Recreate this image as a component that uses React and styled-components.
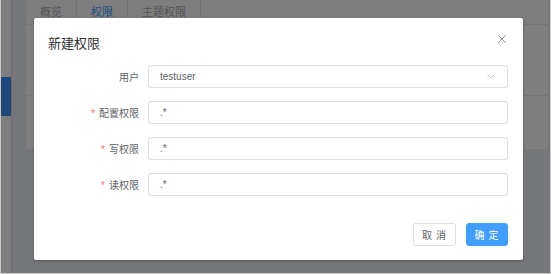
import React from "react";
import styled, { createGlobalStyle } from "styled-components";

const GlobalStyle = createGlobalStyle`
  html, body {
    margin: 0;
    padding: 0;
    background: #ffffff;
  }
  body {
    font-family: "Liberation Sans", "Noto Sans CJK SC", sans-serif;
  }
  * {
    box-sizing: border-box;
  }
`;

const Frame = styled.div`
  position: relative;
  width: 551px;
  height: 274px;
  display: flex;
  overflow: hidden;
  border-left: 1px solid #c9c9c9;
  border-right: 1px solid #c9c9c9;
  border-bottom: 1px solid #c9c9c9;
`;

const Sidebar = styled.div`
  width: 11px;
  background: #fcfcfc;
  border-right: 1px solid #d6d7dc;
  padding-top: 77px;
`;

const NavActive = styled.div`
  height: 39px;
  background: #3d8ef5;
`;

const Main = styled.div`
  flex: 1;
  background: #eceef4;
  padding: 0 2px 0 14px;
`;

const Card = styled.div`
  height: 149px;
  background: #ffffff;
`;

const TabBar = styled.div`
  display: flex;
  height: 25px;
  border-bottom: 1px solid #eaebee;
  background: #fdfdfd;
`;

const Tab = styled.div`
  padding: 0 14px;
  height: 25px;
  line-height: 22px;
  font-size: 11px;
  font-family: "Noto Sans CJK SC", sans-serif;
  color: ${(p) => (p.active ? "#409eff" : "#a8aab0")};
  border-right: 1px solid #e4e7ed;
`;

const TableRow = styled.div`
  height: 71px;
  border-bottom: 1px solid #eaebee;
`;

const Overlay = styled.div`
  position: absolute;
  inset: 0;
  background: rgba(0, 0, 0, 0.5);
  padding: 18px 0 0 33px;
`;

const Dialog = styled.div`
  width: 489px;
  height: 242px;
  background: #ffffff;
  border-radius: 2px;
  box-shadow: 0 1px 3px rgba(0, 0, 0, 0.3);
  display: flex;
  flex-direction: column;
`;

const Header = styled.div`
  display: flex;
  justify-content: space-between;
  align-items: center;
  padding: 16px 16px 0 14px;
`;

const Title = styled.div`
  font-family: "Noto Sans CJK SC", sans-serif;
  font-size: 13px;
  line-height: 18px;
  color: #303133;
`;

const Close = styled.svg`
  width: 10px;
  height: 10px;
  margin-top: -8px;
`;

const Body = styled.div`
  display: flex;
  flex-direction: column;
  gap: 13px;
  padding: 13px 15px 0 14px;
`;

const Row = styled.div`
  display: flex;
  align-items: center;
`;

const Label = styled.div`
  width: 100px;
  padding-right: 9px;
  text-align: right;
  font-family: "Noto Sans CJK SC", sans-serif;
  font-size: 10px;
  color: #606266;
`;

const Star = styled.span`
  color: #f56c6c;
  margin-right: 4px;
  font-family: "Liberation Sans", sans-serif;
`;

const Field = styled.div`
  flex: 1;
  height: 23px;
  display: flex;
  align-items: center;
  justify-content: space-between;
  border: 1px solid #dcdfe6;
  border-radius: 3px;
  padding: 0 12px 0 11px;
  font-size: 10px;
  color: #606266;
`;

const Footer = styled.div`
  display: flex;
  justify-content: flex-end;
  gap: 10px;
  padding: 27px 15px 14px;
`;

const Button = styled.div`
  height: 23px;
  width: ${(p) => (p.primary ? "42px" : "43px")};
  display: flex;
  align-items: center;
  justify-content: center;
  border-radius: 3px;
  font-family: "Noto Sans CJK SC", sans-serif;
  font-size: 10px;
  letter-spacing: 1px;
  white-space: pre;
  color: ${(p) => (p.primary ? "#ffffff" : "#606266")};
  background: ${(p) => (p.primary ? "#409eff" : "#ffffff")};
  border: 1px solid ${(p) => (p.primary ? "#409eff" : "#dcdfe6")};
`;

const fields = [
  { label: "配置权限", value: ".*" },
  { label: "写权限", value: ".*" },
  { label: "读权限", value: ".*" },
];

const App = () => {
  return (
    <>
      <GlobalStyle />
      <Frame>
        <Sidebar>
          <NavActive />
        </Sidebar>
        <Main>
          <Card>
            <TabBar>
              <Tab>概览</Tab>
              <Tab active>权限</Tab>
              <Tab>主题权限</Tab>
            </TabBar>
            <TableRow />
          </Card>
        </Main>
        <Overlay>
          <Dialog>
            <Header>
              <Title>新建权限</Title>
              <Close viewBox="0 0 10 10">
                <path d="M1 1 L9 9 M9 1 L1 9" stroke="#909399" strokeWidth="1" fill="none" />
              </Close>
            </Header>
            <Body>
              <Row>
                <Label>用户</Label>
                <Field>
                  <span>testuser</span>
                  <svg width="8" height="5" viewBox="0 0 8 5">
                    <path d="M0.5 0.5 L4 4 L7.5 0.5" stroke="#c0c4cc" strokeWidth="1" fill="none" />
                  </svg>
                </Field>
              </Row>
              {fields.map((f) => (
                <Row key={f.label}>
                  <Label>
                    <Star>*</Star>
                    {f.label}
                  </Label>
                  <Field>{f.value}</Field>
                </Row>
              ))}
            </Body>
            <Footer>
              <Button>取 消</Button>
              <Button primary>确 定</Button>
            </Footer>
          </Dialog>
        </Overlay>
      </Frame>
    </>
  );
};

export default App;
